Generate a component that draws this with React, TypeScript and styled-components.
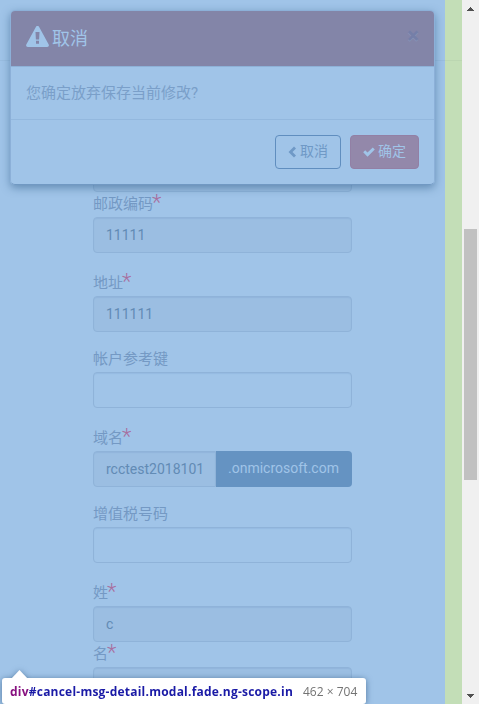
import React from "react";
import styled, { createGlobalStyle } from "styled-components";

const GlobalStyle = createGlobalStyle`
  * { box-sizing: border-box; }
  body { margin: 0; overflow: hidden; }
`;

const Window = styled.div`
  position: relative;
  display: flex;
  width: 479px;
  height: 704px;
  overflow: hidden;
  background: #a0c4e8;
  color: #7a9fc9;
  font: 14px/20px Roboto, "Noto Sans CJK SC", sans-serif;
`;

const Page = styled.div`
  flex: 1;
  min-width: 0;
  height: 704px;
  overflow: hidden;
`;

const TopBar = styled.div`
  height: 61px;
  border-bottom: 1px solid #99bde0;
`;

const Form = styled.form`
  width: 259px;
  margin: 95px 0 0 93px;
`;

const Group = styled.div<{ $tight?: boolean }>`
  margin-bottom: ${(p) => (p.$tight ? 0 : 18)}px;
`;

const Label = styled.label<{ $required?: boolean }>`
  display: flex;
  height: ${(p) => (p.$required ? 25 : 22)}px;
  padding-top: ${(p) => (p.$required ? 3 : 0)}px;
  color: #7499c4;
  font-size: 15px;
  line-height: 18px;
`;

const Star = styled.span`
  color: #a86f9f;
  font-size: 22px;
  font-weight: 300;
  line-height: 22px;
  margin-top: -3px;
  margin-left: -1px;
`;

const Control = styled.div<{ $filled?: boolean; $joined?: boolean }>`
  flex: 1;
  min-width: 0;
  height: 36px;
  padding: 8px 12px;
  border: 1px solid #8fb3d9;
  border-radius: ${(p) => (p.$joined ? "4px 0 0 4px" : "4px")};
  background: ${(p) => (p.$filled ? "#9bbee2" : "#a0c4e8")};
  box-shadow: inset 0 1px 1px rgba(60, 110, 165, 0.1);
  color: #628bb5;
  line-height: 18px;
  white-space: nowrap;
`;

const InputGroup = styled.div`
  display: flex;
`;

const Addon = styled.div`
  flex: none;
  width: 136px;
  height: 36px;
  padding: 8px 12px;
  border-radius: 0 4px 4px 0;
  background: #6593c2;
  color: #a0c4e8;
  line-height: 18px;
`;

const Gutter = styled.div`
  width: 17px;
  height: 704px;
  background: #c3deb7;
`;

const GutterTop = styled.div`
  height: 61px;
  border-bottom: 1px solid #bbd6b1;
`;

const Scrollbar = styled.div`
  display: flex;
  flex-direction: column;
  align-items: center;
  justify-content: space-between;
  width: 17px;
  height: 704px;
  padding: 7px 0 6px;
  background: #f0f0f0;
`;

const Track = styled.div`
  width: 13px;
  height: 682px;
  padding-top: 217px;
`;

const Thumb = styled.div`
  height: 251px;
  background: #c1c1c1;
`;

const Arrow = styled.svg`
  display: block;
  flex: none;
  width: 7px;
  height: 4px;
  fill: #505050;
`;

const Modal = styled.div`
  position: absolute;
  top: 10px;
  left: 10px;
  width: 425px;
  height: 175px;
  overflow: hidden;
  border: 1px solid #8cb0d8;
  border-bottom-color: #7199c3;
  border-radius: 5px;
  background: #a0c4e8;
`;

const ModalShadow = styled.div`
  position: absolute;
  top: 10px;
  left: 10px;
  width: 425px;
  height: 175px;
  border-radius: 5px;
  box-shadow: 0 3px 9px rgba(40, 85, 130, 0.5);
`;

const ModalHeader = styled.div`
  display: flex;
  align-items: center;
  height: 55px;
  padding: 0 14px 0 15px;
  border-radius: 1px 1px 0 0;
  background: #8385a8;
  color: #a0c4e8;
  font-size: 18px;
`;

const Title = styled.div`
  flex: 1;
  line-height: 26px;
`;

const Close = styled.div`
  width: 14px;
  margin-top: -6px;
  color: #757fa8;
  font: bold 22px/22px Roboto, sans-serif;
  text-shadow: 0 1px 0 #8794b7;
  text-align: center;
`;

const ModalBody = styled.div`
  height: 54px;
  padding: 16px 15px;
  border-top: 1px solid #8eb1d7;
  border-bottom: 1px solid #93b8de;
  font-size: 15px;
  line-height: 20px;
`;

const ModalFooter = styled.div`
  display: flex;
  justify-content: flex-end;
  gap: 9px;
  padding: 15px 15px 0;
`;

const Button = styled.div<{ $primary?: boolean }>`
  display: flex;
  align-items: center;
  width: ${(p) => (p.$primary ? 69 : 66)}px;
  height: 34px;
  padding: 0 0 2px 12px;
  border: 1px solid ${(p) => (p.$primary ? "#9280a5" : "#608ebf")};
  border-radius: 4px;
  background: ${(p) => (p.$primary ? "#9388aa" : "transparent")};
  color: ${(p) => (p.$primary ? "#a0c4e8" : "#6f99c6")};
`;

const Icon = styled.svg<{ $w: number; $h: number; $gap?: number }>`
  display: block;
  flex: none;
  width: ${(p) => p.$w}px;
  height: ${(p) => p.$h}px;
  margin-top: ${(p) => (p.$w > 20 ? -4 : 1)}px;
  margin-right: ${(p) => p.$gap ?? 4}px;
  fill: currentColor;
`;

const Tooltip = styled.div`
  position: absolute;
  left: 2px;
  bottom: 0;
  display: flex;
  width: 364px;
  height: 26px;
  padding: 0 8px;
  border-radius: 3px;
  background: #fff;
  color: #1a1aa6;
  font: bold 12px/27px "Open Sans", "Noto Sans", sans-serif;
  white-space: nowrap;
  filter: drop-shadow(0 1px 3px rgba(30, 70, 110, 0.6));
`;

const Pointer = styled.svg`
  position: absolute;
  left: 9px;
  top: -8px;
  width: 17px;
  height: 9px;
  fill: #fff;
`;

const Selector = styled.span`
  width: 293px;
  letter-spacing: 0.225px;
`;

const Tag = styled.span`
  color: #881280;
`;

const Size = styled.span`
  color: #737373;
  font-weight: 400;
`;

type Field = {
  label: string;
  value?: string;
  required?: boolean;
  tight?: boolean;
  suffix?: string;
};

const fields: Field[] = [
  { label: "邮政编码", value: "11111", required: true },
  { label: "地址", value: "111111", required: true },
  { label: "帐户参考键" },
  { label: "域名", value: "rcctest2018101", required: true, suffix: ".onmicrosoft.com" },
  { label: "增值税号码" },
  { label: "姓", value: "c", required: true, tight: true },
  { label: "名", value: " ", required: true },
];

export default function App() {
  return (
    <>
      <GlobalStyle />
      <Window>
        <Page>
          <TopBar />
          <Form>
            <Control $filled />
            {fields.map((f) => (
              <Group key={f.label} $tight={f.tight}>
                <Label $required={f.required}>
                  {f.label}
                  {f.required && <Star>*</Star>}
                </Label>
                <InputGroup>
                  <Control $filled={!!f.value} $joined={!!f.suffix}>
                    {f.value}
                  </Control>
                  {f.suffix && <Addon>{f.suffix}</Addon>}
                </InputGroup>
              </Group>
            ))}
          </Form>
        </Page>
        <Gutter>
          <GutterTop />
        </Gutter>
        <Scrollbar>
          <Arrow viewBox="0 0 7 4" shapeRendering="crispEdges">
            <path d="M3 0h1v1h1v1h1v1h1v1H0V3h1V2h1V1h1z" />
          </Arrow>
          <Track>
            <Thumb />
          </Track>
          <Arrow viewBox="0 0 7 4" shapeRendering="crispEdges">
            <path d="M0 0h7v1H6v1H5v1H4v1H3V3H2V2H1V1H0z" />
          </Arrow>
        </Scrollbar>
        <ModalShadow />
        <Modal>
          <ModalHeader>
            <Icon $w={23} $h={21} $gap={3} viewBox="0 0 23 21">
              <path
                fillRule="evenodd"
                d="M10 .8a1.700 1.700 0 0 1 3 0l9.700 17.700c.6 1.100-.2 2.500-1.500 2.500H1.800C.5 21-.3 19.600.3 18.500zM9.500 6l.4 7.400h3.200l.4-7.400zM10 14.800v2.900h3v-2.900z"
              />
            </Icon>
            <Title>取消</Title>
            <Close>×</Close>
          </ModalHeader>
          <ModalBody>您确定放弃保存当前修改?</ModalBody>
          <ModalFooter>
            <Button>
              <Icon $w={8} $h={12} viewBox="0 0 8 12">
                <path d="M6 .5 8 2.500 4.500 6 8 9.500l-2 2L.5 6z" />
              </Icon>
              取消
            </Button>
            <Button $primary>
              <Icon $w={12} $h={10} $gap={3} viewBox="0 0 12 10">
                <path d="M.2 5.200 2.200 3.200 4.500 5.500 9.800.4l2 2-7.300 7.300z" />
              </Icon>
              确定
            </Button>
          </ModalFooter>
        </Modal>
        <Tooltip>
          <Pointer viewBox="0 0 17 9">
            <path d="M0 9 8.500 0 17 9z" />
          </Pointer>
          <Selector>
            <Tag>div</Tag>#cancel-msg-detail.modal.fade.ng-scope.in
          </Selector>
          <Size>462 × 704</Size>
        </Tooltip>
      </Window>
    </>
  );
}
